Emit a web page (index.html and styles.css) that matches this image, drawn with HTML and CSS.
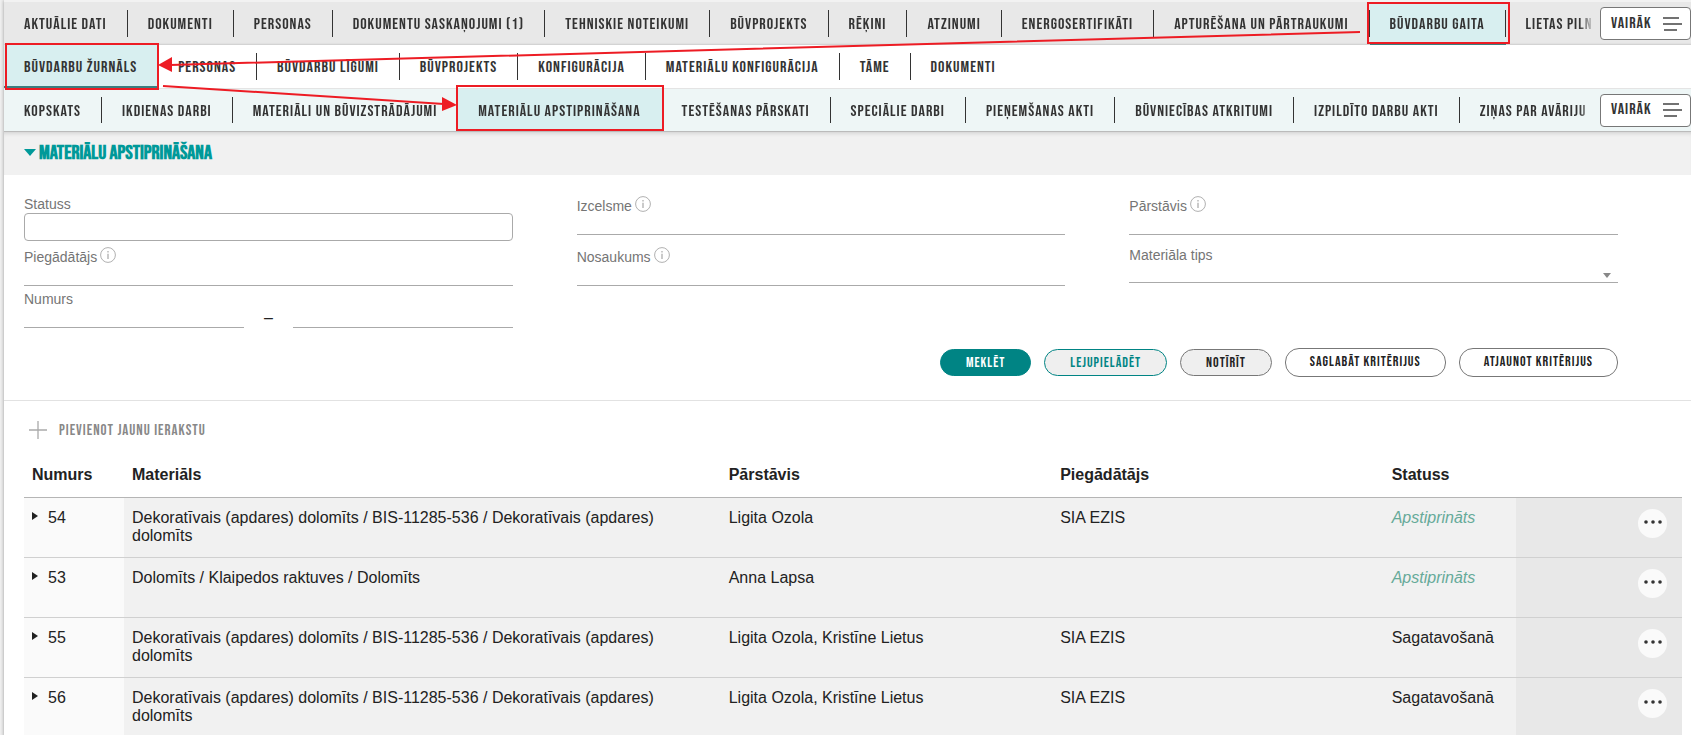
FILE: index.html
```html
<!DOCTYPE html>
<html lang="lv">
<head>
<meta charset="utf-8">
<title>Materiālu apstiprināšana</title>
<link rel="stylesheet" href="styles.css">
</head>
<body>
<svg class="sprite" aria-hidden="true">
  <symbol id="info" viewBox="0 0 16 16"><circle cx="8" cy="8" r="7.4" fill="none" stroke="#b0b0b0"/><path d="M8 4v1.6M8 6.8v5.2" stroke="#bdbdbd" stroke-width="1.6"/></symbol>
  <symbol id="menu" viewBox="0 0 20 14"><path d="M1 1h16M1 7h19M2 13h13" stroke="#444" stroke-width="1.3" fill="none"/></symbol>
  <symbol id="dots" viewBox="0 0 20 6"><circle cx="3" cy="3" r="1.8"/><circle cx="10" cy="3" r="1.8"/><circle cx="17" cy="3" r="1.8"/></symbol>
</svg>
<div class="page">
  <nav class="bar bar-case" aria-label="Lieta">
    <div class="tabs">
      <a href="#">Aktuālie dati</a><a href="#">Dokumenti</a><a href="#">Personas</a><a href="#">Dokumentu saskaņojumi (1)</a><a href="#">Tehniskie noteikumi</a><a href="#">Būvprojekts</a><a href="#">Rēķini</a><a href="#">Atzinumi</a><a href="#">Energosertifikāti</a><a href="#">Apturēšana un pārtraukumi</a><a href="#" class="active">Būvdarbu gaita</a><a href="#">Lietas piln</a>
    </div>
    <button class="more" type="button">Vairāk <svg width="20" height="14"><use href="#menu"/></svg></button>
  </nav>
  <nav class="bar bar-work" aria-label="Būvdarbu gaita">
    <div class="tabs">
      <a href="#" class="active">Būvdarbu žurnāls</a><a href="#">Personas</a><a href="#">Būvdarbu līgumi</a><a href="#">Būvprojekts</a><a href="#">Konfigurācija</a><a href="#">Materiālu konfigurācija</a><a href="#">Tāme</a><a href="#">Dokumenti</a>
    </div>
  </nav>
  <nav class="bar bar-log" aria-label="Būvdarbu žurnāls">
    <div class="tabs">
      <a href="#">Kopskats</a><a href="#">Ikdienas darbi</a><a href="#">Materiāli un būvizstrādājumi</a><a href="#" class="active">Materiālu apstiprināšana</a><a href="#">Testēšanas pārskati</a><a href="#">Speciālie darbi</a><a href="#">Pieņemšanas akti</a><a href="#">Būvniecības atkritumi</a><a href="#">Izpildīto darbu akti</a><a href="#">Ziņas par avāriju</a>
    </div>
    <button class="more" type="button">Vairāk <svg width="20" height="14"><use href="#menu"/></svg></button>
  </nav>

  <header class="heading">
    <svg width="12" height="7" aria-hidden="true"><path d="M0 0h12L6 7z"/></svg>
    <h1>Materiālu apstiprināšana</h1>
  </header>

  <form class="search">
    <div class="fields">
      <div class="field"><label for="status">Statuss</label><input id="status" class="boxed" type="text"></div>
      <div class="field hinted"><label for="origin">Izcelsme <svg width="16" height="16"><use href="#info"/></svg></label><input id="origin" type="text"></div>
      <div class="field hinted"><label for="agent">Pārstāvis <svg width="16" height="16"><use href="#info"/></svg></label><input id="agent" type="text"></div>
      <div class="field hinted"><label for="supplier">Piegādātājs <svg width="16" height="16"><use href="#info"/></svg></label><input id="supplier" type="text"></div>
      <div class="field hinted"><label for="name">Nosaukums <svg width="16" height="16"><use href="#info"/></svg></label><input id="name" type="text"></div>
      <div class="field"><label for="type">Materiāla tips</label><div class="select"><select id="type"><option></option></select><svg width="8" height="5"><path d="M0 0h8L4 5z"/></svg></div></div>
      <div class="field"><label for="from">Numurs</label><div class="range"><input id="from" type="text"><span>–</span><input type="text" aria-label="Numurs līdz"></div></div>
    </div>
    <div class="actions">
      <button class="pill primary" type="button">Meklēt</button>
      <button class="pill outline" type="button">Lejupielādēt</button>
      <button class="pill gray" type="button">Notīrīt</button>
      <button class="pill wide" type="button">Saglabāt kritērijus</button>
      <button class="pill wide" type="button">Atjaunot kritērijus</button>
    </div>
  </form>

  <main class="list">
    <button class="add" type="button"><svg width="18" height="18"><path d="M9 0v18M0 9h18" stroke="#aaa" stroke-width="1.3"/></svg><span>Pievienot jaunu ierakstu</span></button>
    <table>
      <colgroup><col class="c-num"><col class="c-mat"><col class="c-rep"><col class="c-rep"><col class="c-stat"><col class="c-act"></colgroup>
      <thead><tr><th>Numurs</th><th>Materiāls</th><th>Pārstāvis</th><th>Piegādātājs</th><th>Statuss</th><th></th></tr></thead>
      <tbody>
        <tr><td><div class="num"><svg width="6" height="8"><path d="M0 0l6 4-6 4z"/></svg>54</div></td><td>Dekoratīvais (apdares) dolomīts / BIS-11285-536 / Dekoratīvais (apdares) dolomīts</td><td>Ligita Ozola</td><td>SIA EZIS</td><td class="approved">Apstiprināts</td><td><button class="dots" type="button" aria-label="Darbības"><svg width="20" height="6"><use href="#dots"/></svg></button></td></tr>
        <tr><td><div class="num"><svg width="6" height="8"><path d="M0 0l6 4-6 4z"/></svg>53</div></td><td>Dolomīts / Klaipedos raktuves / Dolomīts</td><td>Anna Lapsa</td><td></td><td class="approved">Apstiprināts</td><td><button class="dots" type="button" aria-label="Darbības"><svg width="20" height="6"><use href="#dots"/></svg></button></td></tr>
        <tr><td><div class="num"><svg width="6" height="8"><path d="M0 0l6 4-6 4z"/></svg>55</div></td><td>Dekoratīvais (apdares) dolomīts / BIS-11285-536 / Dekoratīvais (apdares) dolomīts</td><td>Ligita Ozola, Kristīne Lietus</td><td>SIA EZIS</td><td>Sagatavošanā</td><td><button class="dots" type="button" aria-label="Darbības"><svg width="20" height="6"><use href="#dots"/></svg></button></td></tr>
        <tr><td><div class="num"><svg width="6" height="8"><path d="M0 0l6 4-6 4z"/></svg>56</div></td><td>Dekoratīvais (apdares) dolomīts / BIS-11285-536 / Dekoratīvais (apdares) dolomīts</td><td>Ligita Ozola, Kristīne Lietus</td><td>SIA EZIS</td><td>Sagatavošanā</td><td><button class="dots" type="button" aria-label="Darbības"><svg width="20" height="6"><use href="#dots"/></svg></button></td></tr>
      </tbody>
    </table>
  </main>
</div>

<svg class="marks" aria-hidden="true">
  <g fill="none" stroke="#ed1c24" stroke-width="2">
    <rect x="1368" y="3" width="141" height="40"/>
    <rect x="6" y="44" width="152" height="45"/>
    <rect x="457" y="86" width="206" height="44"/>
    <path d="M1360 32L170 65M163 86L444 104"/>
  </g>
  <path d="M158 65l14-8v15zM457 105l-15-8v14z" fill="#ed1c24"/>
</svg>
</body>
</html>
```
FILE: styles.css
```css
* { box-sizing: border-box; }
html { height: 100%; overflow: hidden; }
body {
  margin: 0;
  position: relative;
  background: #f2f2f2;
  color: #222;
  font: 16px/18px "Liberation Sans", Arial, sans-serif;
}
button, input, select { font: inherit; color: inherit; }
.sprite { display: none; }

.page {
  margin-left: 4px;
  padding-top: 2px;
  background: #f2f2f2;
  box-shadow: 0 0 4px #999;
}

.bar, .heading h1, .pill, .add {
  font-family: "Bebas Neue", "Oswald", sans-serif;
  text-transform: uppercase;
}
.bar, .pill, .add { letter-spacing: 1px; }
.more { letter-spacing: inherit; }

/* tab bars */
.bar {
  display: flex;
  height: 43px;
  overflow: hidden;
}
.bar-case { background: #e8e8e8; box-shadow: inset 0 -2px 2px -1px #ccc; }
.bar-work { background: #fff; }
.bar-log { height: 44px; background: #eef6f6; border-top: 1px solid #e4e4e4; border-bottom: 1px solid #bbb; }
.tabs {
  display: flex;
  flex: 1;
  min-width: 0;
  overflow: hidden;
}
.bar-case .tabs, .bar-log .tabs { mask-image: linear-gradient(to right, #000 calc(100% - 16px), transparent); }
.tabs a {
  position: relative;
  display: flex;
  flex: none;
  align-items: center;
  padding: 3px 21px 0 20px;
  color: #333;
  text-decoration: none;
  white-space: nowrap;
}
.tabs a:last-child { padding-right: 0; }
.tabs a:not(:last-child)::after {
  content: "";
  position: absolute;
  right: 0;
  top: 8px;
  bottom: 8px;
  width: 1px;
  background: #333;
}
.tabs .active { background: #d8eff0; box-shadow: inset 0 -2px #3b7f80; }
.bar-work .active::after, .bar-log .active::after { display: none; }
.more {
  display: flex;
  align-items: center;
  justify-content: space-between;
  align-self: center;
  width: 91px;
  height: 33px;
  margin-left: 5px;
  padding: 0 8px 0 10px;
  border: 1px solid #777;
  border-radius: 4px;
  background: #fff;
  text-transform: uppercase;
  color: #333;
}

.heading {
  display: flex;
  align-items: center;
  gap: 3px;
  height: 43px;
  padding: 0 20px 2px;
  background: #f1f1f1;
  box-shadow: inset 0 4px 4px -3px #ccc;
  color: #099;
}
.heading svg { fill: #099; }
.heading h1 { margin: 0; font-size: 20px; line-height: 20px; }

/* search form */
.search {
  padding: 21px 73px 23px 20px;
  background: #fff;
  border-bottom: 1px solid #e2e2e2;
}
.fields {
  display: grid;
  grid-template-columns: repeat(3, 1fr);
  grid-template-rows: 51px 44px 37px;
  column-gap: 64px;
}
.field { display: flex; flex-direction: column; }
.field label { display: flex; gap: 3px; font-size: 14px; line-height: 17px; color: #757575; }
.hinted label { line-height: 20px; }
.field input, .field select {
  display: block;
  width: 100%;
  min-width: 0;
  height: 19px;
  padding: 0 4px;
  border: 0;
  border-bottom: 1px solid #aaa;
  border-radius: 0;
  background: transparent;
  appearance: none;
}
.field .boxed { height: 28px; border: 1px solid #aaa; border-radius: 4px; }
.range { display: flex; gap: 20px; height: 20px; align-items: flex-end; }
.range span { line-height: 20px; color: #222; }
.select { position: relative; }
.select svg { position: absolute; right: 7px; bottom: 5px; fill: #888; }

.actions {
  display: flex;
  flex-wrap: wrap;
  justify-content: flex-end;
  align-items: center;
  gap: 13px;
  margin-top: 20px;
}
.pill {
  height: 27px;
  padding: 0 25px;
  border: 1px solid #777;
  border-radius: 14px;
  background: #fff;
  font-size: 14px;
  line-height: 14px;
}
.primary { background: #008484; border-color: #008484; color: #fff; }
.outline { background: #efefef; border-color: #008484; color: #008484; }
.gray { background: #efefef; }
.wide { height: 29px; padding: 0 24px 2px; }

/* records */
.list { padding: 19px 9px 0 20px; background: #fff; }
.add {
  display: flex;
  align-items: center;
  gap: 12px;
  padding: 0 5px;
  border: 0;
  background: none;
  font-size: 15px;
  line-height: 18px;
  color: #888;
}
.add span { padding-top: 2px; }
table { width: 100%; margin-top: 12px; border-collapse: collapse; table-layout: fixed; }
.c-num { width: 100px; }
.c-mat { width: 36%; }
.c-rep { width: 20%; }
.c-stat { width: 8%; }
.c-act { width: 10%; }
th { height: 45px; padding: 2px 8px 0; text-align: left; border-bottom: 1px solid #b5b5b5; }
td { height: 60px; padding: 11px 8px 0; vertical-align: top; background: #f1f1f1; border-bottom: 1px solid #d0d0d0; }
td:first-child { background: #fafafa; }
td:last-child { padding-right: 15px; background: #e8e8e8; }
.num { display: flex; align-items: center; gap: 10px; }
.num svg { margin-bottom: 3px; fill: #222; }
.approved { font-style: italic; color: #6a9; }
.dots {
  display: flex;
  align-items: center;
  justify-content: center;
  width: 29px;
  height: 29px;
  margin-left: auto;
  padding: 0 0 2px;
  border: 0;
  border-radius: 50%;
  background: #fafafa;
}
.dots svg { fill: #333; }

/* annotation layer over the tab bars */
.marks {
  position: absolute;
  left: 0;
  top: 0;
  width: 100%;
  height: 140px;
  pointer-events: none;
}
```
